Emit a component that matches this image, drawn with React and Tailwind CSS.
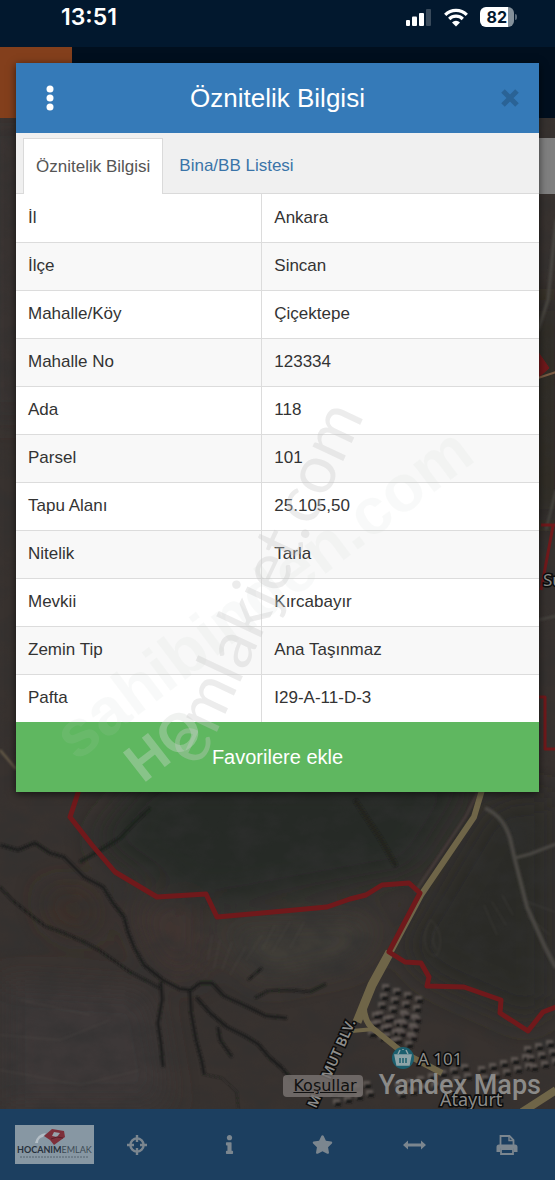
import React from 'react';
import { FaInfo, FaStar } from 'react-icons/fa';

const rows = [
  ['İl', 'Ankara'],
  ['İlçe', 'Sincan'],
  ['Mahalle/Köy', 'Çiçektepe'],
  ['Mahalle No', '123334'],
  ['Ada', '118'],
  ['Parsel', '101'],
  ['Tapu Alanı', '25.105,50'],
  ['Nitelik', 'Tarla'],
  ['Mevkii', 'Kırcabayır'],
  ['Zemin Tip', 'Ana Taşınmaz'],
  ['Pafta', 'I29-A-11-D-3'],
];

// small houses next to the boulevard: [x, y, columns, rows]
const blocks = [
  [382, 984, 4, 6],
  [372, 1012, 3, 3],
  [402, 1012, 2, 3],
  [395, 1082, 7, 2],
  [330, 1090, 4, 2],
  [478, 1066, 5, 2],
  [524, 1046, 3, 3],
];

function StatusBar() {
  return (
    <div className="flex h-[47px] items-start justify-between bg-[#02182e] pr-[38px] pl-[61px] text-white">
      <span className="pt-0.5 font-[Inter,sans-serif] text-[23px] leading-[30px] font-semibold">13:51</span>
      <div className="flex items-center gap-3 pt-[7px]">
        <svg width="27" height="18" viewBox="0 0 27 18" fill="currentColor">
          <rect x="1" y="12" width="4" height="6" rx="1" />
          <rect x="7" y="8.5" width="5" height="9.5" rx="1" />
          <rect x="14" y="5" width="5" height="13" rx="1" />
          <rect x="21" y="1" width="5" height="17" rx="1" opacity="0.22" />
        </svg>
        <svg width="24" height="19" viewBox="0 0 24 19" fill="none" stroke="currentColor" strokeWidth="3.2">
          <path d="M1.2 6.8a15.4 15.4 0 0 1 21.6 0" />
          <path d="M5.2 11a9.7 9.7 0 0 1 13.6 0" />
          <path d="M12 18.6l-4-4.2a5.8 5.8 0 0 1 8 0z" fill="currentColor" stroke="none" />
        </svg>
        <div className="flex items-center gap-px">
          <div className="flex h-5 items-center justify-center rounded-md bg-linear-to-r from-white from-82% to-[#84909a] to-82% px-[7px] font-[Inter,sans-serif] text-base leading-5 font-bold text-[#02182e]">
            82
          </div>
          <div className="h-1.5 w-0.5 rounded-r bg-[#5a6a7a]" />
        </div>
      </div>
    </div>
  );
}

function MapView() {
  return (
    <svg
      className="absolute inset-0 h-full w-full"
      viewBox="0 118 555 991"
      preserveAspectRatio="xMidYMid slice"
      role="img"
      aria-label="Harita"
    >
      <defs>
        <filter id="terrain" x="0" y="0" width="100%" height="100%">
          <feTurbulence type="fractalNoise" baseFrequency="0.03 0.045" numOctaves="5" seed="8" />
          <feColorMatrix values="0 0 0 0 0.03  0 0 0 0 0.03  0 0 0 0 0.03  1.5 0.6 0 0 -0.85" />
        </filter>
        <filter id="soft" x="-30%" y="-30%" width="160%" height="160%">
          <feGaussianBlur stdDeviation="16" />
        </filter>
        <filter id="edge">
          <feGaussianBlur stdDeviation="1" />
        </filter>
      </defs>
      <rect y="118" width="555" height="991" fill="#38322f" />
      <g filter="url(#soft)">
        <path d="M150 770L480 770L415 875L220 910L160 890L90 840Z" fill="#262a26" />
        <path d="M490 800L555 790V1005L530 1025L430 980L400 950Z" fill="#292a25" />
        <path d="M0 980L150 990L170 1109H0Z" fill="#3c3839" />
        <path d="M130 900L200 900L200 980L160 970Z" fill="#403633" />
        <path d="M210 925L380 915L360 960L260 980Z" fill="#403c37" />
        <path d="M40 890L90 890L100 930L60 930Z" fill="#3d2d26" />
        <path d="M0 118H20V420H0Z" fill="#3b3535" />
        <path d="M538 300H555V520H538Z" fill="#27221f" />
      </g>
      <rect y="118" width="555" height="991" filter="url(#terrain)" opacity="0.75" />

      <g fill="none" stroke="#1c1e1c" strokeWidth="3" strokeLinejoin="round" filter="url(#edge)">
        <path d="M0 887L12 900L28 913L45 926L64 933L84 942L99 950L130 972L160 988" strokeWidth="2" />
        <path d="M0 845L18 850L35 843L50 853L64 857L84 877L103 887L113 903L124 917L128 932L134 947L144 965L163 980L180 989L191 990L200 983L212 983L224 996L248 1007L266 1016L287 1018" />
        <path d="M161 982L162 1000L158 1023L161 1044L163 1067" />
        <path d="M190 990L191 1012L196 1040L202 1062L204 1074" />
        <path d="M196 997L210 1013L227 1027L245 1036L258 1044L269 1057L282 1068L297 1087" />
        <path d="M218 1027L220 1040L232 1057" />
        <path d="M255 998L268 991L290 990L310 992L326 984M248 980L262 968" strokeWidth="2" />
        <path d="M202 1074L222 1078L237 1092L238 1109" strokeWidth="1" />
        <path d="M150 808L135 822L120 838L104 848L80 862" stroke="#1a211c" />
        <path d="M355 800L368 820L380 838L396 866" stroke="#22231f" strokeWidth="4" />
      </g>
      <g fill="none" stroke="#5a5650" strokeWidth="1" opacity="0.35" filter="url(#edge)">
        <path d="M212 935L208 960M220 940L214 968M232 942L222 970M246 946L230 975M262 935L246 960M275 925L262 950M290 922L272 952M304 922L290 948" />
        <path d="M430 920C420 940 426 955 436 956C444 945 440 925 430 920M436 926C430 940 434 946 437 950" />
        <path d="M484 905L497 935M492 902L506 925M502 895L513 915M522 900L555 912M526 915L550 935" />
        <path d="M0 1035L60 1040L110 1020M0 1070L80 1085L140 1070M20 1000L90 1015" />
      </g>

      {/* side roads */}
      <g fill="none" stroke="#4a4743" strokeWidth="4" filter="url(#edge)">
        <path d="M485 808C500 815 506 826 510 838L515 860L527 907L545 947L556 968" />
        <path d="M515 858L530 854L556 844" strokeWidth="3" />
        <path d="M0 750L16 769" stroke="#6b604c" strokeWidth="2" />
        <path d="M478 792L466 816L415 892" strokeWidth="2" stroke="#4b3f3c" />
        <path d="M538 330L548 300L556 220" strokeWidth="3" />
        <path d="M556 490L546 530M538 620L556 616" strokeWidth="2" />
      </g>
      {/* houses */}
      <g filter="url(#edge)">
        {blocks.map(([x, y, cols, lines], b) =>
          Array.from({ length: cols * lines }, (_, i) => {
            const cx = x + (i % cols) * 11 + Math.floor(i / cols) * (b < 3 ? -2 : 3);
            const cy = y + Math.floor(i / cols) * 9 + (i % cols) * (b < 3 ? 4 : -3);
            return (
              <g key={`${b}-${i}`}>
                <rect x={cx} y={cy} width="7" height="5" fill="#655e5a" opacity="0.8" />
                <rect x={cx + 2} y={cy + 3} width="6" height="4" fill="#141312" />
              </g>
            );
          }),
        )}
      </g>
      {/* boulevard */}
      <g fill="none" stroke="#6f6548" strokeLinejoin="round">
        <path d="M482 790L474 817L421 895L389 955" strokeWidth="6" />
        <path d="M390 952L372 985L357 1022" strokeWidth="9" />
        <path d="M364 1000Q362 1022 376 1031L402 1052L442 1073" strokeWidth="6" />
        <path d="M352 1031L374 1029" strokeWidth="4" />
        <path d="M522 1112L556 1090" strokeWidth="8" />
      </g>
      {/* parcel border */}
      <g fill="none" stroke="#70191b" strokeWidth="5" strokeLinejoin="round">
        <path d="M79 790L70 817L92 845L115 872L157 897L206 894L217 917L327 907L350 899L366 895L382 885L409 883L420 893L389 952L405 962L421 963L429 977L427 986L464 987L501 1000L500 1013L528 1031L543 1012L556 1007" />
        <path d="M541 525H555M553 526L541 590" strokeWidth="3" />
        <path d="M538 697H545V749H556" strokeWidth="3" />
        <path d="M538 352L549 368L538 378Z" fill="#70191b" strokeWidth="1" />
        <path d="M538 378L556 372" stroke="#7a5a42" strokeWidth="2" />
      </g>

      {/* place names */}
      <g
        className="font-['Noto_Sans','Liberation_Sans',sans-serif]"
        fill="#8d8c8a"
        stroke="#0c0c0c"
        strokeWidth="3"
        paintOrder="stroke"
      >
        <text x="543" y="586" fontSize="17">Su</text>
        <text x="418" y="1065" fontSize="17">A 101</text>
        <text x="440" y="1106" fontSize="18">Atayurt</text>
        <text transform="translate(316 1109) rotate(-66)" fontSize="14" fontWeight="600">M</text>
        <text transform="translate(330 1080) rotate(-66)" fontSize="14" fontWeight="600">MUT BLV.</text>
      </g>
      <g>
        <circle cx="403" cy="1058" r="11" fill="#1c5f6e" />
        <g fill="none" stroke="#8fa4a8" strokeWidth="1.5">
          <path d="M395 1055H411L409 1065H397Z" fill="#8fa4a8" />
          <path d="M398 1054L400 1050M408 1054L406 1050M403 1050V1049" />
          <path d="M400 1058V1063M403 1058V1063M406 1058V1063" stroke="#1c5f6e" />
        </g>
      </g>
    </svg>
  );
}

function Attribution() {
  return (
    <div className="absolute inset-x-0 bottom-0 flex items-end justify-end gap-4 pr-3.5 pb-2">
      <a
        href="#kosullar"
        className="mb-1 rounded bg-[#77716f]/85 pr-1.5 pl-2.5 font-['DejaVu_Sans',sans-serif] text-base leading-[22px] text-[#111] underline"
      >
        Koşullar
      </a>
      <a href="#yandex" className="font-[Roboto,sans-serif] text-[27px] leading-8 font-medium text-[#8b8a88]">
        Yandex Maps
      </a>
    </div>
  );
}

function InfoPanel() {
  return (
    <section className="absolute inset-x-4 top-[63px] bg-white shadow-[0_2px_8px_rgba(0,0,0,0.6)]">
      <header className="flex h-[70px] items-center justify-between bg-[#357ab8] px-4 text-white">
        <button aria-label="Menü" className="flex h-9 w-9 items-center justify-center">
          <svg width="8" height="26" viewBox="0 0 8 26" fill="currentColor">
            <circle cx="4" cy="4" r="3.5" />
            <circle cx="4" cy="13" r="3.5" />
            <circle cx="4" cy="22" r="3.5" />
          </svg>
        </button>
        <h1 className="text-[26px] leading-8">Öznitelik Bilgisi</h1>
        <button aria-label="Kapat" className="flex h-9 w-9 items-center justify-end pr-1 text-[#2a6396]">
          <svg width="18" height="18" viewBox="0 0 18 18" stroke="currentColor" strokeWidth="5">
            <path d="M2 2L16 16M16 2L2 16" />
          </svg>
        </button>
      </header>

      <div
        role="tablist"
        className="flex h-[61px] items-end border-b border-[#dadada] bg-[#f0f0f0] pl-[7px] text-[17px] leading-6"
      >
        <button
          role="tab"
          aria-selected="true"
          className="-mb-px h-[56px] border border-b-0 border-[#dadada] bg-white px-3 text-[#555]"
        >
          Öznitelik Bilgisi
        </button>
        <button role="tab" aria-selected="false" className="h-[54px] px-4 text-[#3a74a8]">
          Bina/BB Listesi
        </button>
      </div>

      <table className="w-full table-fixed border-collapse text-[17px] leading-6 text-[#333]">
        <tbody>
          {rows.map(([label, value]) => (
            <tr key={label} className="h-12 border-b border-[#dcdcdc] last:border-b-0 even:bg-[#f8f8f8]">
              <th scope="row" className="w-[47%] border-r border-[#dcdcdc] px-3 text-left font-normal">
                {label}
              </th>
              <td className="px-3">{value}</td>
            </tr>
          ))}
        </tbody>
      </table>

      <button className="block h-[70px] w-full bg-[#5fb760] text-xl text-white">Favorilere ekle</button>
    </section>
  );
}

function Watermarks() {
  return (
    <svg
      className="pointer-events-none absolute top-0 left-0 w-full"
      viewBox="0 0 555 800"
      fontFamily="Liberation Sans, sans-serif"
      aria-hidden="true"
    >
      <text transform="translate(76 762) rotate(-37)" fontSize="66" fontWeight="700" fill="#c5cfc8" opacity="0.1">
        sahibinden.com
      </text>
      <text transform="translate(143 784) rotate(-38)" fontSize="54" fontWeight="700" fill="#d5dbd5" opacity="0.35">
        HO
      </text>
      <text
        transform="translate(200 768) rotate(-65)"
        fontFamily="Lato, sans-serif"
        fontSize="67"
        fill="#c9c9c9"
        opacity="0.35"
      >
        emlakjet.com
      </text>
    </svg>
  );
}

function BottomBar() {
  return (
    <nav className="flex h-[71px] items-center bg-[#1c3f60] pr-0.5 text-[#7b868f]">
      <a href="#hocanim" aria-label="Hocanım Emlak" className="w-[91px] shrink-0 pl-[15px]">
        <svg className="block" width="79" height="39" viewBox="0 0 79 39" fontFamily="Lato, sans-serif">
          <rect width="79" height="39" fill="#8797a3" />
          <path d="M20 18Q22 9 31 8L28 12Q23 13 23 18Z" fill="#b4bec6" />
          <path d="M29 11L37 4L49 6L50 12L39 20L35 15Z" fill="#7d2f3a" />
          <path d="M39 7L45 8L42 12L37 11Z" fill="#97a2ab" />
          <path d="M36 14L42 12L48 13" fill="none" stroke="#5a1f2a" />
          <text x="2" y="28" fontSize="9" fontWeight="700" fill="#27313b">
            HOCANIM
            <tspan fontWeight="400" fill="#3d4a55">EMLAK</tspan>
          </text>
          <path d="M5 32H74" stroke="#566470" strokeDasharray="2 1" />
        </svg>
      </a>
      <button aria-label="Konum" className="flex flex-1 justify-center">
        <svg width="20" height="20" viewBox="0 0 20 20" fill="none" stroke="currentColor" strokeWidth="2.4">
          <circle cx="10" cy="10" r="6.6" />
          <path d="M10 0V7M10 13V20M0 10H7M13 10H20" />
        </svg>
      </button>
      <button aria-label="Bilgi" className="flex flex-1 justify-center">
        <FaInfo size={19} />
      </button>
      <button aria-label="Favoriler" className="flex flex-1 justify-center">
        <FaStar size={21} />
      </button>
      <button aria-label="Ölçüm" className="flex flex-1 justify-center">
        <svg width="23" height="10" viewBox="0 0 23 10" fill="currentColor">
          <path d="M0 5L5 0.5V3.6H18V0.5L23 5L18 9.5V6.4H5V9.5Z" />
        </svg>
      </button>
      <button aria-label="Yazdır" className="flex flex-1 justify-center">
        <svg width="22" height="20" viewBox="0 0 22 20" fill="none" stroke="currentColor" strokeWidth="1.8">
          <path d="M4.5 10V1H13.5L17.5 5V10" />
          <path d="M13 1V5.5H17.5" strokeWidth="1.4" />
          <path d="M5 14V19H17V14Z" />
          <path d="M0.5 17V12Q0.5 9.5 3 9.5H19Q21.5 9.5 21.5 12V17H18V13.5H4V17Z" fill="currentColor" stroke="none" />
        </svg>
      </button>
    </nav>
  );
}

export default function App() {
  return (
    <div className="relative flex min-h-screen flex-col overflow-hidden font-['Liberation_Sans',sans-serif]">
      <StatusBar />
      <div className="h-[71px] bg-[#010f1e]">
        <div className="h-full w-[72px] bg-[#833f1c]" />
      </div>
      <main className="relative flex-1">
        <MapView />
        <div className="absolute top-5 right-0 h-14 w-10 bg-[#7f7f7f]" />
        <Attribution />
      </main>
      <BottomBar />
      <InfoPanel />
      <Watermarks />
    </div>
  );
}
